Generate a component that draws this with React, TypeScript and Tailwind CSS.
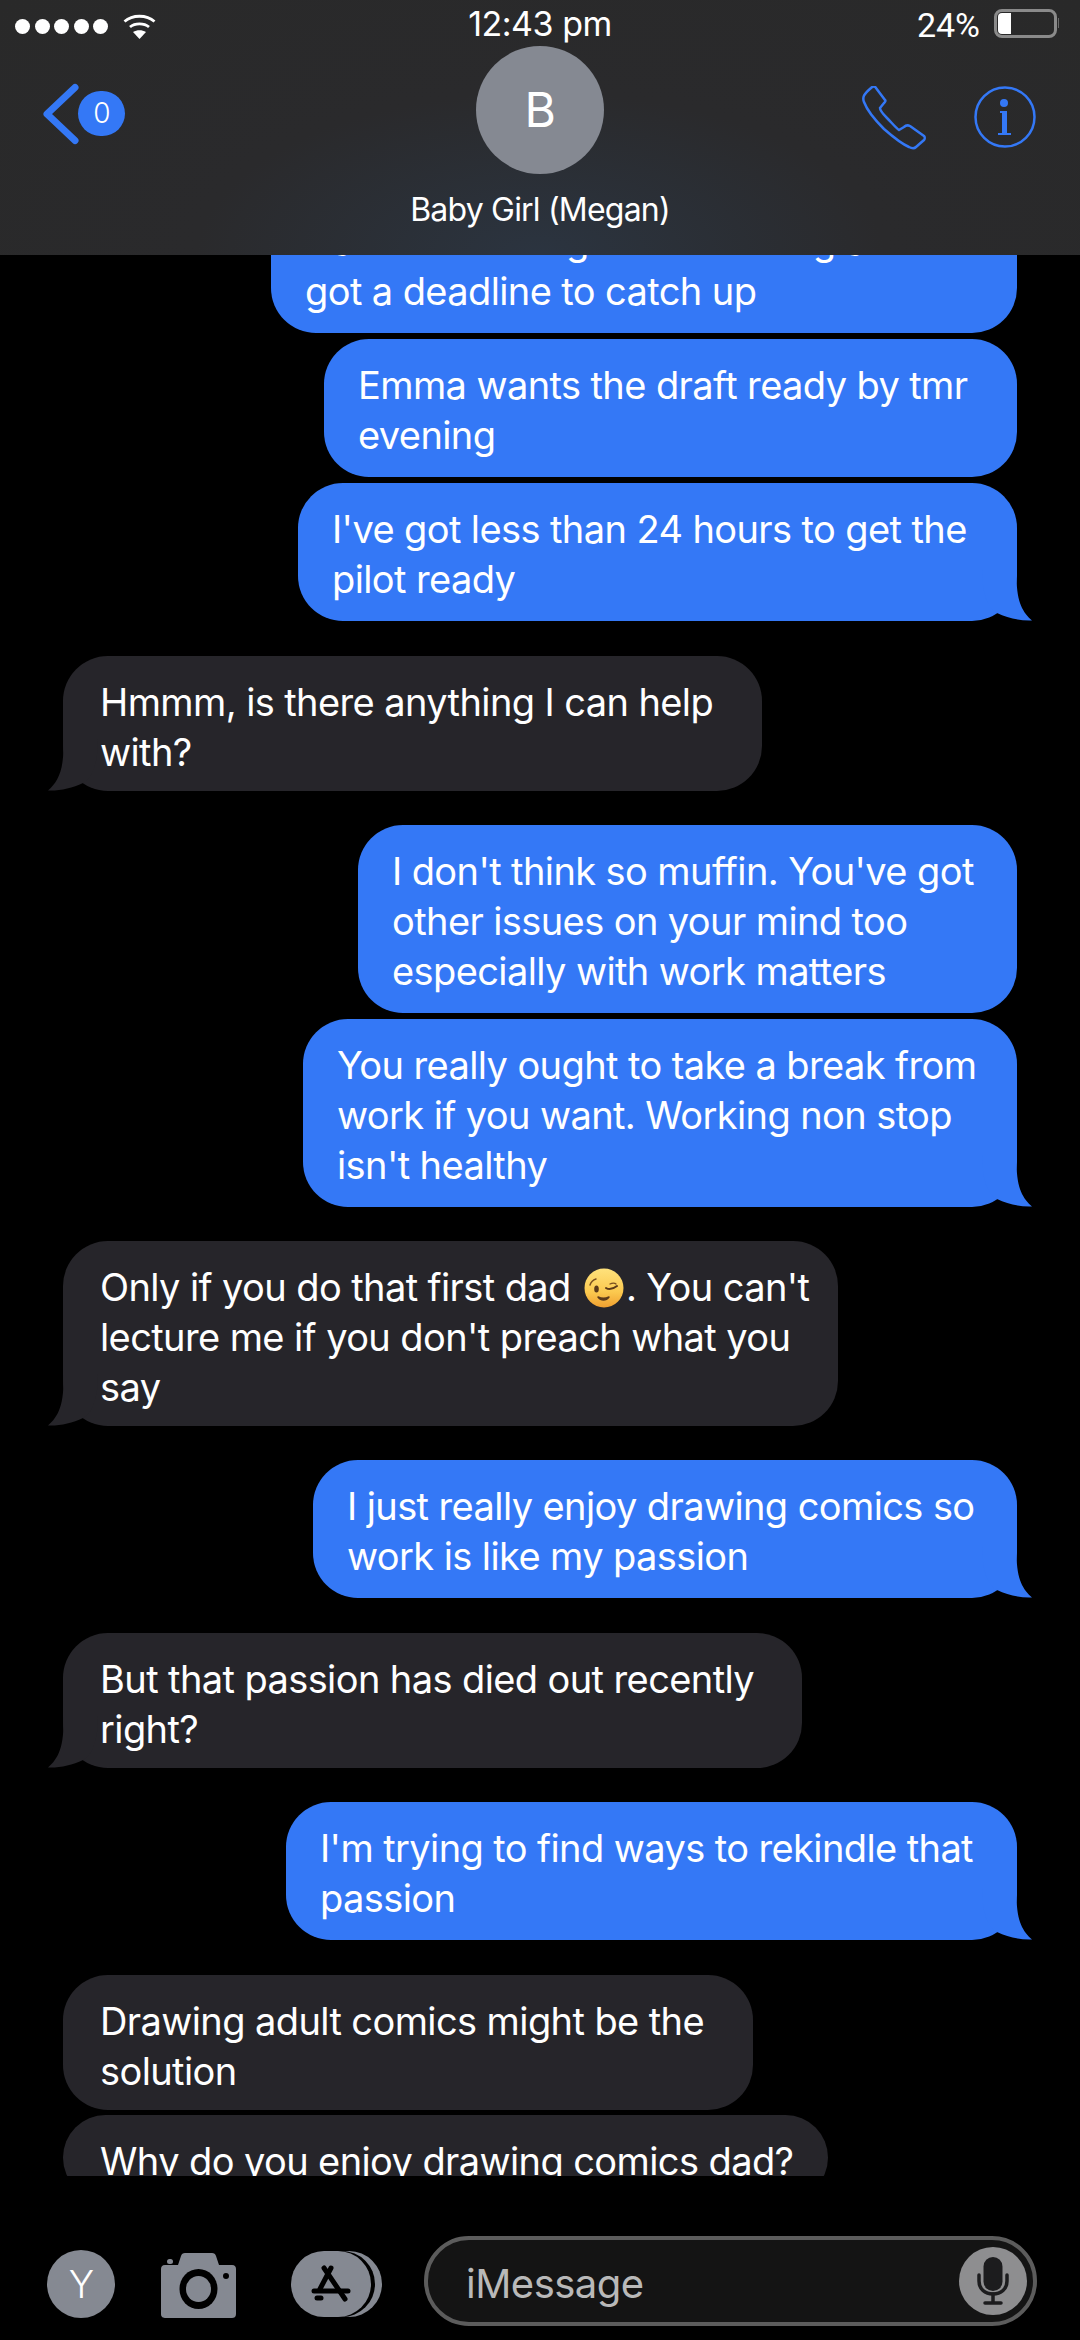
const BLUE = "#3478f6";
const GREY = "#26252a";

type Msg = { side: "me" | "them"; lines: string[]; tail?: boolean; width: number };

function Tail({ side, color }: { side: "me" | "them"; color: string }) {
  if (side === "me") {
    return (
      <svg className="absolute right-[-15px] bottom-0" width="70" height="60" viewBox="0 0 70 60">
        <path d="M55 8C53 38 60 51 70 59.500C58 60 46 57 35 52C30 50 20 40 20 8Z" fill={color} />
      </svg>
    );
  }
  return (
    <svg className="absolute left-[-15px] bottom-0" width="70" height="60" viewBox="0 0 70 60">
      <path d="M15 8C17 38 10 51 0 59.500C12 60 24 57 35 52C40 50 50 40 50 8Z" fill={color} />
    </svg>
  );
}

function WinkEmoji() {
  return (
    <svg className="ml-[3px] mr-[2px] inline-block align-[-7px]" width="40" height="40" viewBox="0 0 40 40">
      <defs>
        <linearGradient id="wink" x1="0" y1="0" x2="0" y2="1">
          <stop offset="0" stopColor="#ffe27c" />
          <stop offset="0.6" stopColor="#fbc94f" />
          <stop offset="1" stopColor="#f0a030" />
        </linearGradient>
      </defs>
      <circle cx="20" cy="20" r="19.500" fill="url(#wink)" />
      <ellipse cx="12.500" cy="21" rx="2.300" ry="3.500" fill="#5b3a1a" />
      <path d="M6 17C7 14 9 12 12 11" stroke="#7a5020" strokeWidth="1.500" fill="none" strokeLinecap="round" />
      <path d="M22 20C25 22 29 21 33 18" stroke="#5b3a1a" strokeWidth="2" fill="none" strokeLinecap="round" />
      <path d="M26 16C28 15 31 15 32 16" stroke="#7a5020" strokeWidth="1.300" fill="none" strokeLinecap="round" />
      <path d="M14 29C17 33 22 33 25 29C21 31 18 31 14 29Z" stroke="#5b3a1a" strokeWidth="1.500" fill="#5b3a1a" strokeLinejoin="round" />
    </svg>
  );
}

function Line({ children }: { children: React.ReactNode }) {
  return <div className="h-[50px] whitespace-nowrap leading-[50px]">{children}</div>;
}

function Bubble({ msg }: { msg: Msg }) {
  const me = msg.side === "me";
  return (
    <div
      className={`relative rounded-[45px] text-white ${me ? "self-end bg-[#3478f6] pb-[17px] pl-[34px] pt-[21px]" : "self-start bg-[#26252a] pb-[14px] pl-[37px] pt-[21px]"}`}
      style={{ width: msg.width }}
    >
      {msg.lines.map((line, i) => (
        <Line key={i}>{line}</Line>
      ))}
      {msg.tail && <Tail side={msg.side} color={me ? BLUE : GREY} />}
    </div>
  );
}

function Wifi() {
  return (
    <svg width="33" height="25" viewBox="0 0 33 25" fill="none" stroke="white" strokeWidth="2.800">
      <path d="M1.500 7.500C9.500 0.500 23.500 0.500 31.500 7.500" />
      <path d="M7 13C12 8.800 21 8.800 26 13" />
      <path d="M16.500 25L10 18C14 15.500 19 15.500 23 18Z" fill="white" stroke="none" />
    </svg>
  );
}

function StatusBar() {
  return (
    <div className="relative flex h-[46px] items-center justify-between pl-[15px] pr-[21px]">
      <div className="mt-[6px] flex items-center gap-[15px]">
        <div className="flex gap-[4.500px]">
          {[0, 1, 2, 3, 4].map((i) => (
            <div key={i} className="h-[15px] w-[15px] rounded-full bg-white" />
          ))}
        </div>
        <Wifi />
      </div>
      <div className="absolute left-0 right-0 top-[1px] text-center text-[34px] leading-[46px] tracking-[-0.5px] text-white">12:43 pm</div>
      <div className="flex items-center">
        <span className="mr-[14px] mt-[3px] font-['Roboto',sans-serif] text-[34px] leading-[46px] tracking-[0px] text-white">24%</span>
        <div className="h-[29px] w-[63px] rounded-[8px] border-[3px] border-[#8a8a8a] p-[1px]">
          <div className="h-full w-[13px] rounded-l-[4px] bg-white" />
        </div>
        <div className="ml-[1px] h-[10px] w-[1px] bg-[#6a6a6a]" />
      </div>
    </div>
  );
}

function NavBar() {
  return (
    <div className="relative flex flex-1 justify-between">
      <div className="ml-[42px] mt-[37px] flex h-[62px] items-center">
        <svg width="37" height="62" viewBox="0 0 37 62" fill="none" stroke="#3478f6" strokeWidth="7" strokeLinecap="round" strokeLinejoin="round">
          <path d="M33 4.500L5 31L33 57.500" />
        </svg>
        <div className="ml-[-1px] mt-[-2px] flex h-[45px] w-[47px] items-center justify-center rounded-full bg-[#3478f6] text-[28px] font-light text-white">0</div>
      </div>
      <div className="absolute left-0 right-0 top-0 flex flex-col items-center">
        <div className="flex h-[128px] w-[128px] items-center justify-center rounded-full bg-[#858992] text-[48px] text-white">B</div>
        <div className="mt-[16px] text-[32px] leading-[40px] tracking-[-0.8px] text-white">Baby Girl (Megan)</div>
      </div>
      <div className="mr-[44px] mt-[40px] flex items-start gap-[48px]">
        <svg width="64" height="64" viewBox="0 0 64 64" fill="none" stroke="#3478f6" strokeWidth="2.500" strokeLinejoin="round">
          <path d="M9 2C11 0 13 0 14 2L23 14C24 15 23 16 22 17L18 22C18 24 20 27 25 32C30 37 34 42 37 44L42 41C44 39 46 39 48 40L62 50C63 51 63 53 62 54L54 61C52 63 49 62 47 61C40 58 30 50 22 43C12 33 5 24 2 16C0 11 2 8 9 2Z" />
        </svg>
        <svg width="62" height="62" viewBox="0 0 62 62" fill="none">
          <circle cx="31" cy="31" r="29.500" stroke="#3478f6" strokeWidth="2.500" />
          <circle cx="30" cy="17" r="4" fill="#3478f6" />
          <path d="M26 25H33V47H37V49H24V47H28V27H26Z" fill="#3478f6" />
        </svg>
      </div>
    </div>
  );
}

function Composer() {
  return (
    <div className="flex h-[164px] items-start pl-[47px] pr-[43px] pt-[60px]">
      <div className="mt-[14px] flex h-[68px] w-[68px] items-center justify-center rounded-full bg-[#858992] text-[38px] font-light text-white">Y</div>
      <svg className="ml-[46px] mt-[17px]" width="76" height="65" viewBox="0 0 76 65">
        <path
          fill="#858992"
          d="M4 12H17L20 3C20.500 1 22 0 24 0H51C53 0 54.500 1 55 3L58 12H71C74 12 75 14 75 16V61C75 64 73 65 71 65H5C2 65 0 64 0 61V16C0 14 1 12 4 12Z"
        />
        <rect x="6" y="6" width="6" height="5" rx="2.500" fill="#858992" />
        <ellipse cx="37.500" cy="36" rx="19" ry="20" fill="#000" />
        <ellipse cx="37.500" cy="36" rx="12.500" ry="13" fill="#858992" />
        <circle cx="65" cy="23" r="3" fill="#000" />
      </svg>
      <div className="relative ml-[54px] mt-[15px] h-[66px] w-[91px]">
        <div className="absolute right-0 top-0 h-[66px] w-[66px] rounded-full bg-[#858992]" />
        <div className="absolute right-[7px] top-0 h-[66px] w-[66px] rounded-full bg-black" />
        <svg className="absolute left-0 top-0" width="80" height="66" viewBox="0 0 80 66">
          <rect width="80" height="66" rx="33" fill="#858992" />
          <g stroke="#000" strokeWidth="5" strokeLinecap="round" fill="none">
            <path d="M40 17L29 38" />
            <path d="M33 17L54 48" />
            <path d="M23 40H57" />
            <path d="M26 47H30" />
          </g>
        </svg>
      </div>
      <div className="relative ml-[42px] flex h-[90px] flex-1 items-center rounded-[45px] border-[4px] border-[#5c5c5c] bg-[#141414] pl-[38px] pt-[6px] text-[40px] tracking-[-0.5px] text-[#b9b9b9]">
        iMessage
        <div className="absolute right-[6px] top-[7px] flex h-[68px] w-[68px] items-center justify-center rounded-full bg-[#8e8e90]">
          <svg width="32" height="48" viewBox="0 0 32 48" fill="none" stroke="#1c1c1e">
            <rect x="6.500" y="0" width="19" height="34" rx="9.500" fill="#1c1c1e" stroke="none" />
            <path d="M2 18V24C2 32 8 37 16 37S30 32 30 24V18" strokeWidth="3.500" strokeLinecap="round" />
            <path d="M16 37V45M8 46H24" strokeWidth="3.500" strokeLinecap="round" />
          </svg>
        </div>
      </div>
    </div>
  );
}

export default function App() {
  return (
    <div className="flex h-[2340px] w-[1080px] flex-col overflow-hidden bg-black font-['Inter',sans-serif] text-[38px] tracking-[-0.6px]">
      <div className="z-10 flex h-[255px] shrink-0 flex-col bg-[radial-gradient(ellipse_at_50%_100%,#2b3440_0%,#2a2a2c_45%,#292929_100%)]">
        <StatusBar />
        <NavBar />
      </div>

      <div className="flex h-[1921px] shrink-0 flex-col overflow-hidden px-[63px]">
        <div className="-mt-[60px] flex flex-col gap-[6px]">
          <Bubble msg={{ side: "me", width: 746, lines: ["Nah I'm working on something as I've", "got a deadline to catch up"] }} />
          <Bubble msg={{ side: "me", width: 693, lines: ["Emma wants the draft ready by tmr", "evening"] }} />
          <Bubble msg={{ side: "me", width: 719, tail: true, lines: ["I've got less than 24 hours to get the", "pilot ready"] }} />
        </div>
        <div className="mt-[35px] flex flex-col">
          <Bubble msg={{ side: "them", width: 699, tail: true, lines: ["Hmmm, is there anything I can help", "with?"] }} />
        </div>
        <div className="mt-[34px] flex flex-col gap-[6px]">
          <Bubble msg={{ side: "me", width: 659, lines: ["I don't think so muffin. You've got", "other issues on your mind too", "especially with work matters"] }} />
          <Bubble msg={{ side: "me", width: 714, tail: true, lines: ["You really ought to take a break from", "work if you want. Working non stop", "isn't healthy"] }} />
        </div>
        <div className="relative mt-[34px] w-[775px] rounded-[45px] bg-[#26252a] pb-[14px] pl-[37px] pt-[21px] text-white">
          <Line>
            Only if you do that first dad <WinkEmoji />. You can't
          </Line>
          <Line>lecture me if you don't preach what you</Line>
          <Line>say</Line>
          <Tail side="them" color={GREY} />
        </div>
        <div className="mt-[34px] flex flex-col">
          <Bubble msg={{ side: "me", width: 704, tail: true, lines: ["I just really enjoy drawing comics so", "work is like my passion"] }} />
        </div>
        <div className="mt-[35px] flex flex-col">
          <Bubble msg={{ side: "them", width: 739, tail: true, lines: ["But that passion has died out recently", "right?"] }} />
        </div>
        <div className="mt-[34px] flex flex-col">
          <Bubble msg={{ side: "me", width: 731, tail: true, lines: ["I'm trying to find ways to rekindle that", "passion"] }} />
        </div>
        <div className="mt-[35px] flex flex-col gap-[5px]">
          <Bubble msg={{ side: "them", width: 690, lines: ["Drawing adult comics might be the", "solution"] }} />
          <Bubble msg={{ side: "them", width: 765, lines: ["Why do you enjoy drawing comics dad?"] }} />
        </div>
      </div>

      <Composer />
    </div>
  );
}
